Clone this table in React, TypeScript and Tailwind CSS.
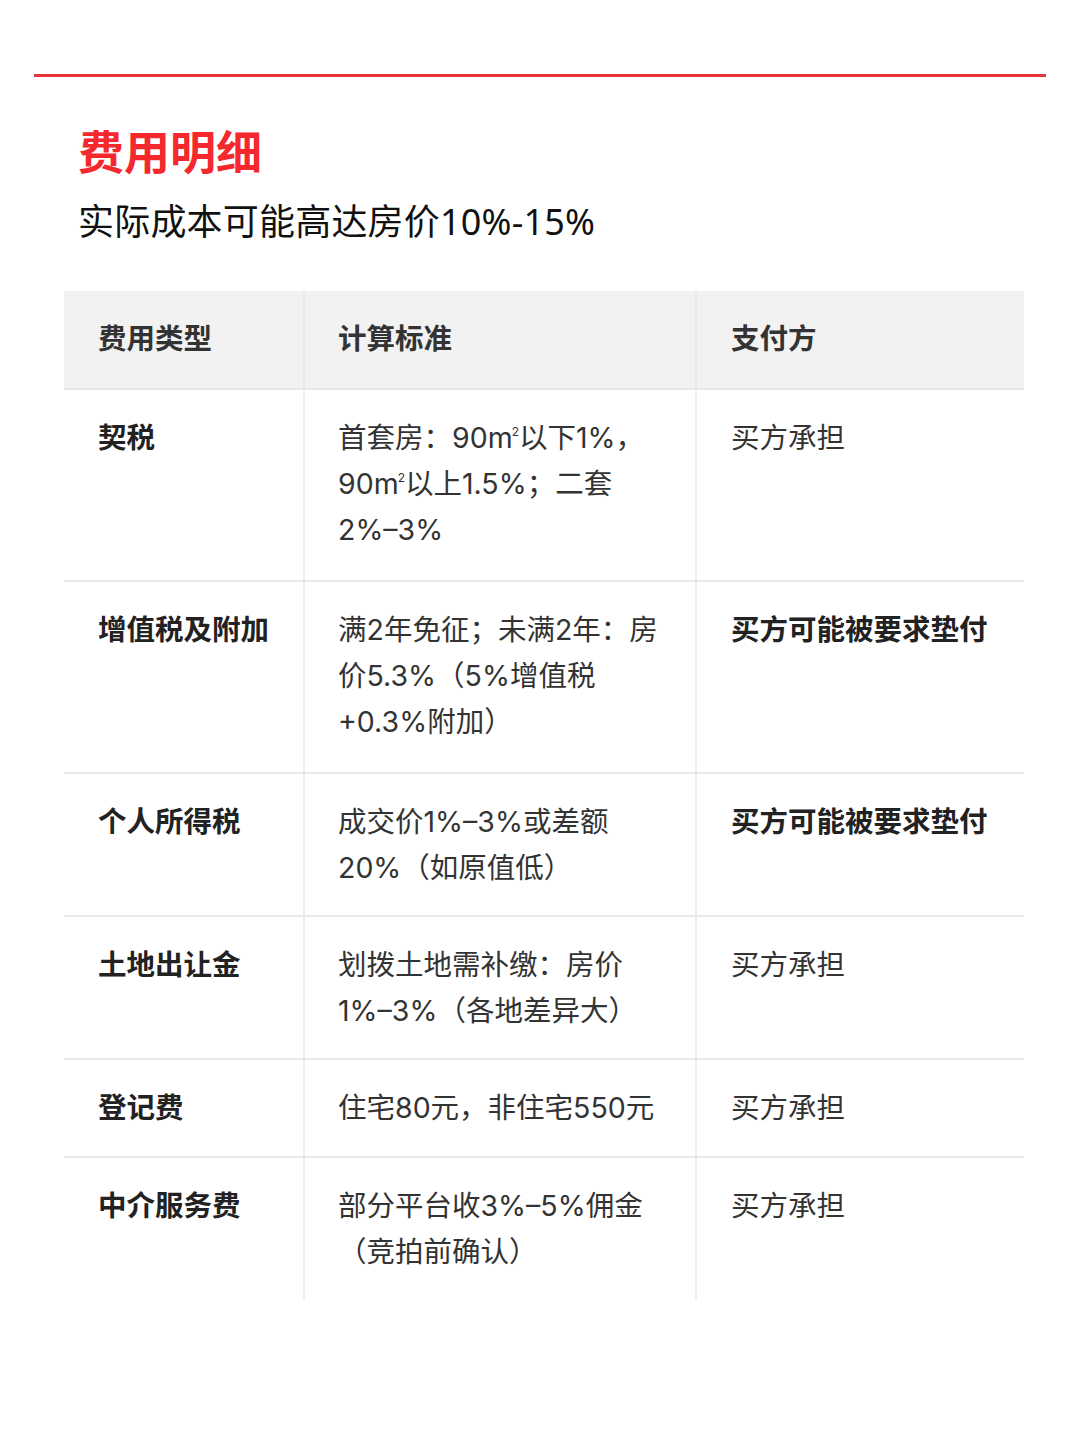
import React from "react";

const M2 = () => (
  <span>
    m<span className="relative top-[-12px] text-[12px] leading-none ml-[-1px]">2</span>
  </span>
);

const rows: { type: string; calc: React.ReactNode[]; payer: string; bold?: boolean }[] = [
  {
    type: "契税",
    calc: [
      <>首套房：90<M2 />以下1%，</>,
      <>90<M2 />以上1.5%；二套</>,
      "2%–3%",
    ],
    payer: "买方承担",
  },
  { type: "增值税及附加", calc: ["满2年免征；未满2年：房", "价5.3%（5%增值税", "+0.3%附加）"], payer: "买方可能被要求垫付", bold: true },
  { type: "个人所得税", calc: ["成交价1%–3%或差额", "20%（如原值低）"], payer: "买方可能被要求垫付", bold: true },
  { type: "土地出让金", calc: ["划拨土地需补缴：房价", "1%–3%（各地差异大）"], payer: "买方承担" },
  { type: "登记费", calc: ["住宅80元，非住宅550元"], payer: "买方承担" },
  { type: "中介服务费", calc: ["部分平台收3%–5%佣金", "（竞拍前确认）"], payer: "买方承担" },
];

const font = { fontFamily: 'Inter, "Noto Sans CJK SC", sans-serif' };

export default function App() {
  return (
    <div className="w-[1080px] h-[1440px] bg-white" style={font}>
      <div className="pt-[74px] px-[34px]">
        <div className="h-[3px] bg-[#e8333a]" />
      </div>
      <div className="pl-[78px] pt-[44px]">
        <div className="text-[46px] leading-[56px] font-bold text-[#f5282d]" style={{ fontFamily: '"Noto Sans CJK SC", sans-serif' }}>
          费用明细
        </div>
        <div className="mt-[24px] text-[36px] leading-[42px] text-[#111] tracking-[0.2px]" style={{ fontFamily: '"Noto Sans", "Noto Sans CJK SC", sans-serif' }}>
          实际成本可能高达房价10%-15%
        </div>
      </div>
      <div className="mx-[64px] mt-[48px] w-[960px]">
        <div className="grid grid-cols-[241px_392px_327px] bg-[#f2f2f2] border-b-2 border-[#e6e6e6]">
          <div className="pl-[34px] pt-[25px] pb-[26px] text-[28.5px] leading-[46px] font-bold text-[#333] border-r-2 border-[#e8e8e8]">费用类型</div>
          <div className="pl-[33px] pt-[25px] pb-[26px] text-[28.5px] leading-[46px] font-bold text-[#333] border-r-2 border-[#e8e8e8]">计算标准</div>
          <div className="pl-[34px] pt-[25px] pb-[26px] text-[28.5px] leading-[46px] font-bold text-[#333]">支付方</div>
        </div>
        {rows.map((r, i) => {
          const pad = r.calc.length === 3 ? "pt-[25px] pb-[27px]" : r.calc.length === 2 ? "pt-[25px] pb-[24px]" : "pt-[25px] pb-[25px]";
          return (
            <div
              key={i}
              className={
                "grid grid-cols-[241px_392px_327px] " +
                (i < rows.length - 1 ? "border-b-2 border-[#e8e8e8]" : "")
              }
            >
              <div className={"pl-[34px] text-[28.5px] leading-[46px] font-bold text-[#222] border-r-2 border-[#ececec] " + pad}>
                {r.type}
              </div>
              <div className={"pl-[33px] text-[28.5px] leading-[46px] text-[#333] border-r-2 border-[#ececec] " + pad}>
                {r.calc.map((l, j) => (
                  <div key={j} className="whitespace-nowrap h-[46px]">{l}</div>
                ))}
              </div>
              <div
                className={
                  "pl-[34px] text-[28.5px] leading-[46px] " +
                  pad +
                  " " +
                  (r.bold ? "font-bold text-[#222]" : "text-[#333]")
                }
              >
                {r.payer}
              </div>
            </div>
          );
        })}
      </div>
    </div>
  );
}
